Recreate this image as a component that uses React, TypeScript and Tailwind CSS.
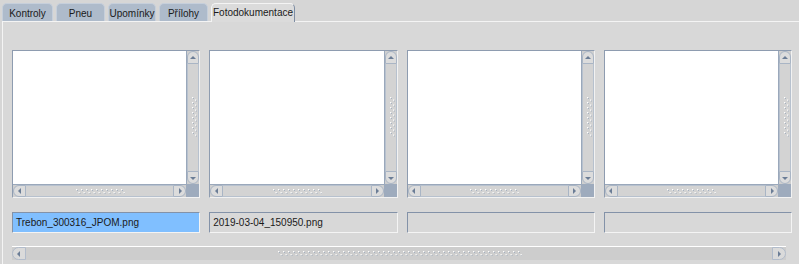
const tabs = ['Kontroly', 'Pneu', 'Upomínky', 'Přílohy', 'Fotodokumentace'];
const tabWidths = ['w-[51px]', 'w-[49px]', 'w-[48px]', 'w-[49px]', 'w-[84px]'];

const files = ['Trebon_300316_JPOM.png', '2019-03-04_150950.png', '', ''];

// embossed staggered dots on a scrollbar thumb
function Grip({ length, vertical }: { length: number; vertical?: boolean }) {
  const n = Math.floor(length / 5);
  const dots = Array.from({ length: n }).flatMap((_, i) => {
    const a = i * 5 + 1;
    return [
      { a, b: 1 },
      { a: a + 2.5, b: 4 },
    ];
  });
  const w = vertical ? 7 : length;
  const h = vertical ? length : 7;
  return (
    <svg width={w} height={h} viewBox={`0 0 ${w} ${h}`}>
      {dots.map((d, i) => {
        const x = vertical ? d.b : d.a;
        const y = vertical ? d.a : d.b;
        return (
          <g key={i}>
            <rect x={x + 1} y={y + 1} width="1" height="1" fill="#a3afbf" />
            <rect x={x} y={y} width="1.2" height="1.2" fill="#ffffff" />
          </g>
        );
      })}
    </svg>
  );
}

function Arrow({ dir }: { dir: 'up' | 'down' | 'left' | 'right' }) {
  const paths = {
    up: 'M1 5 L4 2 L7 5 Z',
    down: 'M1 3 L7 3 L4 6 Z',
    left: 'M5 1 L5 7 L2 4 Z',
    right: 'M3 1 L3 7 L6 4 Z',
  };
  return (
    <svg width="8" height="8" viewBox="0 0 8 8">
      <path d={paths[dir]} fill="#6b7d96" />
    </svg>
  );
}

function VScroll() {
  return (
    <div className="flex w-[13px] flex-col border-l border-[#9aa8bb] bg-[#cfcfcf]">
      <div className="flex h-[13px] items-center justify-center rounded-t-[6px] border border-[#a9b5c5] bg-[#dcdcdc]">
        <Arrow dir="up" />
      </div>
      <div className="flex flex-1 items-center justify-end border-x border-[#b7c1ce] bg-[#d3d3d3]">
        <Grip vertical length={44} />
      </div>
      <div className="flex h-[13px] items-center justify-center rounded-b-[6px] border border-[#a9b5c5] bg-[#dcdcdc]">
        <Arrow dir="down" />
      </div>
    </div>
  );
}

function HScroll() {
  return (
    <div className="flex h-[13px] flex-1 border-t border-[#9aa8bb] bg-[#cfcfcf]">
      <div className="flex w-[13px] items-center justify-center rounded-l-[6px] border border-[#a9b5c5] bg-[#dcdcdc]">
        <Arrow dir="left" />
      </div>
      <div className="flex flex-1 items-center justify-center border-y border-[#b7c1ce] bg-[#d3d3d3]">
        <Grip length={50} />
      </div>
      <div className="flex w-[13px] items-center justify-center rounded-r-[6px] border border-[#a9b5c5] bg-[#dcdcdc]">
        <Arrow dir="right" />
      </div>
    </div>
  );
}

function ImagePane() {
  return (
    <div className="flex h-[148px] flex-col border border-[#8e9cb0] border-b-[#f2f2f2] border-r-[#f2f2f2] bg-[#9eabbd]">
      <div className="flex flex-1">
        <div className="flex-1 bg-white" />
        <VScroll />
      </div>
      <div className="flex">
        <HScroll />
        <div className="w-[13px] bg-[#9eabbd]" />
      </div>
    </div>
  );
}

export default function App() {
  return (
    <div
      className="h-[264px] w-[799px] overflow-hidden bg-[#d6d6d6] text-[10px] text-[#1a1a1a]"
      style={{ fontFamily: '"Liberation Sans", Arial, sans-serif' }}
    >
      {/* Tab strip */}
      <div className="flex items-end gap-[3px] pl-[2px] pt-[3px]">
        {tabs.map((t, i) =>
          i === 4 ? (
            <div
              key={t}
              className={`${tabWidths[i]} relative z-10 -mb-[1px] flex h-[19px] shrink-0 items-center justify-center rounded-t-[5px] border border-b-0 border-[#f4f4f4] border-r-[#7e8da3] bg-[#dbdbdb] pb-[1px]`}
            >
              {t}
            </div>
          ) : (
            <div
              key={t}
              className={`${tabWidths[i]} flex h-[18px] shrink-0 items-center justify-center rounded-t-[5px] border border-b-0 border-[#c6cfdb] bg-[#aebbcb] pt-[1px]`}
            >
              {t}
            </div>
          )
        )}
      </div>

      {/* Tab body */}
      <div className="ml-[2px] h-[245px] border-l border-t border-[#f4f4f4] bg-[#d8d8d8] pl-[9px] pt-[28px]">
        <div className="grid w-[780px] grid-cols-4 gap-x-[9px]">
          {files.map((_, i) => (
            <ImagePane key={i} />
          ))}
        </div>

        <div className="mt-[14px] grid w-[780px] grid-cols-4 gap-x-[9px]">
          {files.map((f, i) => (
            <div
              key={i}
              className={`flex h-[21px] items-center border border-[#8392a8] border-b-[#f4f4f4] border-r-[#f4f4f4] pl-[3px] ${
                i === 0 ? 'bg-[#80bfff]' : 'bg-[#d8d8d8]'
              }`}
            >
              {f}
            </div>
          ))}
        </div>

        {/* Bottom scrollbar */}
        <div className="mt-[13px] flex h-[14px] w-[774px] border-t border-white bg-[#cdcdcd]">
          <div className="flex w-[14px] items-center justify-center rounded-l-[7px] border border-[#b2bccb] bg-[#dadada]">
            <Arrow dir="left" />
          </div>
          <div className="flex flex-1 items-center justify-center">
            <Grip length={245} />
          </div>
          <div className="flex w-[14px] items-center justify-center rounded-r-[7px] border border-[#b2bccb] bg-[#dadada]">
            <Arrow dir="right" />
          </div>
        </div>
      </div>
    </div>
  );
}
